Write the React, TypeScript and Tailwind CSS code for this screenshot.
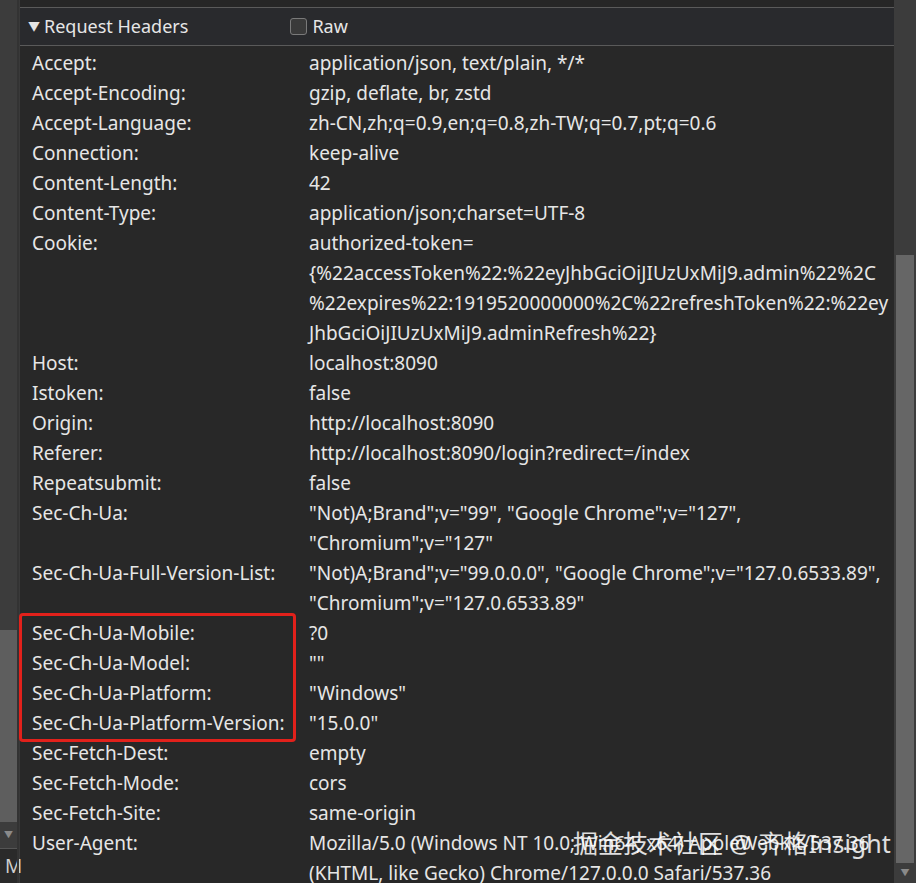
import React from 'react';

type HeaderRow = {
  name: string;
  lines: string[];
};

const rows: HeaderRow[] = [
  { name: 'Accept:', lines: ['application/json, text/plain, */*'] },
  { name: 'Accept-Encoding:', lines: ['gzip, deflate, br, zstd'] },
  { name: 'Accept-Language:', lines: ['zh-CN,zh;q=0.9,en;q=0.8,zh-TW;q=0.7,pt;q=0.6'] },
  { name: 'Connection:', lines: ['keep-alive'] },
  { name: 'Content-Length:', lines: ['42'] },
  { name: 'Content-Type:', lines: ['application/json;charset=UTF-8'] },
  {
    name: 'Cookie:',
    lines: [
      'authorized-token=',
      '{%22accessToken%22:%22eyJhbGciOiJIUzUxMiJ9.admin%22%2C',
      '%22expires%22:1919520000000%2C%22refreshToken%22:%22ey',
      'JhbGciOiJIUzUxMiJ9.adminRefresh%22}',
    ],
  },
  { name: 'Host:', lines: ['localhost:8090'] },
  { name: 'Istoken:', lines: ['false'] },
  { name: 'Origin:', lines: ['http://localhost:8090'] },
  { name: 'Referer:', lines: ['http://localhost:8090/login?redirect=/index'] },
  { name: 'Repeatsubmit:', lines: ['false'] },
  { name: 'Sec-Ch-Ua:', lines: ['"Not)A;Brand";v="99", "Google Chrome";v="127",', '"Chromium";v="127"'] },
  {
    name: 'Sec-Ch-Ua-Full-Version-List:',
    lines: ['"Not)A;Brand";v="99.0.0.0", "Google Chrome";v="127.0.6533.89",', '"Chromium";v="127.0.6533.89"'],
  },
];

const boxed: HeaderRow[] = [
  { name: 'Sec-Ch-Ua-Mobile:', lines: ['?0'] },
  { name: 'Sec-Ch-Ua-Model:', lines: ['""'] },
  { name: 'Sec-Ch-Ua-Platform:', lines: ['"Windows"'] },
  { name: 'Sec-Ch-Ua-Platform-Version:', lines: ['"15.0.0"'] },
];

const tail: HeaderRow[] = [
  { name: 'Sec-Fetch-Dest:', lines: ['empty'] },
  { name: 'Sec-Fetch-Mode:', lines: ['cors'] },
  { name: 'Sec-Fetch-Site:', lines: ['same-origin'] },
  {
    name: 'User-Agent:',
    lines: [
      'Mozilla/5.0 (Windows NT 10.0; Win64; x64) AppleWebKit/537.36',
      '(KHTML, like Gecko) Chrome/127.0.0.0 Safari/537.36',
    ],
  },
];

function Row({ row }: { row: HeaderRow }): JSX.Element {
  return (
    <div className="flex">
      <div className="w-[289px] shrink-0 pl-3 leading-[30px]">{row.name}</div>
      <div className="flex flex-col whitespace-nowrap">
        {row.lines.map((line, i) => (
          <span key={i} className="leading-[30px]">
            {line}
          </span>
        ))}
      </div>
    </div>
  );
}

export default function App(): JSX.Element {
  return (
    <div
      className="relative flex h-[883px] w-[916px] overflow-hidden bg-[#282828] text-[19px] text-[#e6e6e6]"
      style={{ fontFamily: '"Noto Sans", "Noto Sans CJK SC", sans-serif' }}
    >
      {/* left pane scrollbar */}
      <div className="flex w-[20px] shrink-0 border-r border-[#3a3a3a]">
        <div className="flex w-[17px] flex-col bg-[#3c3c3c]">
          <div className="h-[630px]" />
          <div className="h-[192px] bg-[#5e5e5e]" />
          <div className="flex h-[26px] items-center justify-center">
            <span className="text-[9px] text-[#8a8a8a]">▼</span>
          </div>
          <div className="flex flex-1 items-center border-t border-[#555] bg-[#2a2a2a] pl-[5px] text-[#cfcfcf]">M</div>
        </div>
        <div className="w-[2px] bg-[#333]" />
      </div>

      {/* main panel */}
      <div className="flex min-w-0 flex-1 flex-col">
        <div className="h-[8px] shrink-0 border-b border-[#5a5a5a] bg-[#262626]" />
        <div className="flex h-[38px] shrink-0 items-center border-b border-[#5a5a5a] bg-[#292a2d] text-[18px]">
          <span className="ml-[8px] text-[12px] text-[#e4e4e4]">▼</span>
          <span className="ml-[4px]">Request Headers</span>
          <span className="ml-[102px] h-[17px] w-[17px] rounded-[3px] border border-[#7a7a7a] bg-[#3a3a3a]" />
          <span className="ml-[5px]">Raw</span>
        </div>
        <div className="pt-[2px]">
          {rows.map((r) => (
            <Row key={r.name} row={r} />
          ))}
          <div className="relative">
            <div className="pointer-events-none absolute -left-[1px] top-[-5px] h-[129px] w-[277px] rounded-[4px] border-[3px] border-[#e2211b]" />
            {boxed.map((r) => (
              <Row key={r.name} row={r} />
            ))}
          </div>
          {tail.map((r) => (
            <Row key={r.name} row={r} />
          ))}
        </div>
      </div>

      {/* right scrollbar */}
      <div className="flex w-[22px] shrink-0 flex-col bg-[#3c3c3c]">
        <div className="h-[255px]" />
        <div className="mx-[2px] h-[608px] bg-[#666]" />
        <div className="flex flex-1 items-center justify-center">
          <span className="text-[9px] text-[#8a8a8a]">▼</span>
        </div>
      </div>

      {/* watermark */}
      <div className="pointer-events-none absolute left-[573px] top-[825px] whitespace-nowrap text-[25px] text-white/85">
        掘金技术社区 @ 齐格Insight
      </div>
    </div>
  );
}
